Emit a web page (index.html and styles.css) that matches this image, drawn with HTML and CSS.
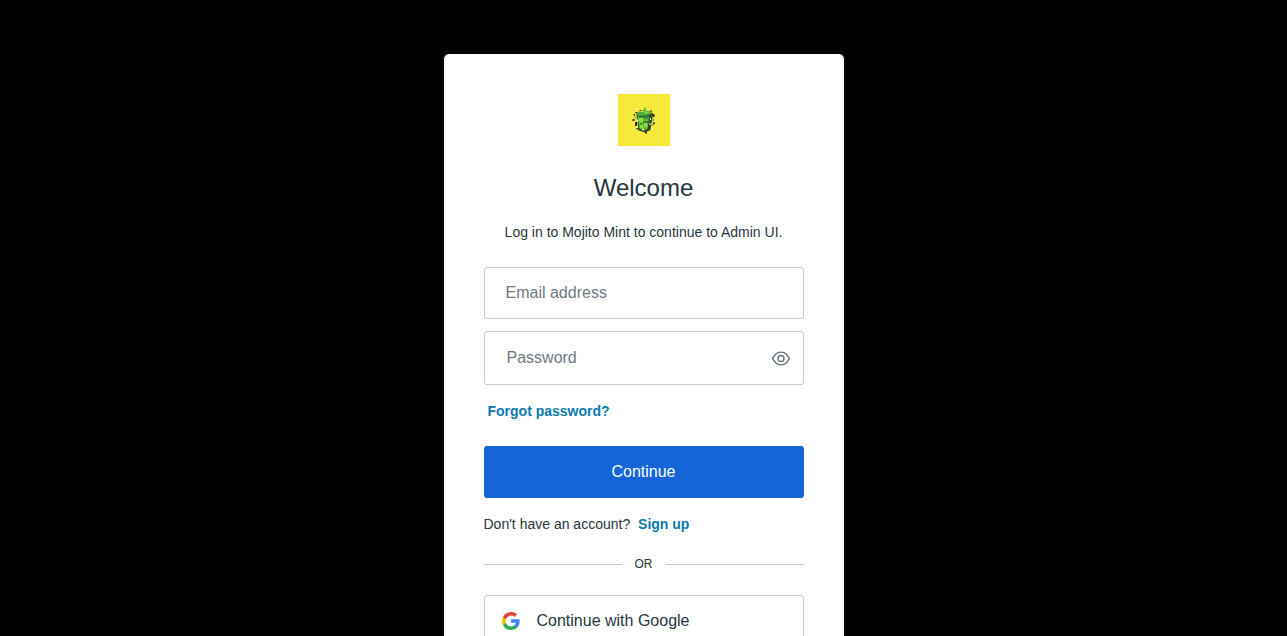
FILE: index.html
```html
<!DOCTYPE html>
<html lang="en">
<head>
    <meta charset="UTF-8">
    <meta name="viewport" content="width=device-width, initial-scale=1.0">
    <title>Log in | Admin UI</title>
    <link rel="stylesheet" href="styles.css">
</head>
<body>
    <main class="login">
        <section class="card">
            <header class="card-header">
                <svg class="logo" viewBox="0 0 52 52" role="img" aria-label="Mojito Mint">
                    <rect width="52" height="52" fill="#f7e93c"/>
                    <!-- glass -->
                    <path d="M18.5 20.5 L35 19 L32.5 36 L27 38.5 L20.5 36.5 Z" fill="#35452a"/>
                    <path d="M19.5 21.5 L31 21.5 L29.8 34.5 L26 36.5 L21.3 34.5 Z" fill="#62bf38"/>
                    <path d="M21 24 h4 v4 h-4z M26 29 h3 v4 h-3z M22 31 h3 v3 h-3z" fill="#8edb45"/>
                    <path d="M25 23 h5 v2 h-5z M22 29 h2 v2 h-2z" fill="#3a9636"/>
                    <path d="M21 22 L31 21 L31 22.5 L21 23.5 Z" fill="#2b5a2a"/>
                    <!-- mint leaves -->
                    <path d="M18 20.5 L21 17.5 L24.5 18 L27 13 L29 17 L34.5 17.5 L32 20.5 L25 22 Z" fill="#4caf35"/>
                    <path d="M26 18.5 L28 14 L28.3 18 L33 18 L28 20 Z" fill="#8bd13f"/>
                    <path d="M34.5 23 L36.5 24.5 L36 28 L34 27 Z M16 22 L18 22 L18.5 26 L17 25 Z M34 30 h2 v2 h-2z" fill="#8fc43d"/>
                    <!-- outline and speckles -->
                    <path d="M17.5 18 h2 v1.5 h-2z M14.5 25 h2 v2 h-2z M17 28 h2 v4 h-2z M34.5 20 h2 v3 h-2z M27 38 h2 v1.5 h-2z M35 28.5 h2 v1.5 h-2z M15.5 20 h1.5 v1.5 h-1.5z M21.5 16 h2 v1 h-2z M32 16.5 h2 v1 h-2z M18.5 34 h2 v1.5 h-2z M25 27.5 h5 v1 h-5z" fill="#2a301a"/>
                    <path d="M18 14.5 h2 v1.5 h-2z M19 25.5 h1.3 v2 h-1.3z M32 24 h1 v2 h-1z M31.5 29 h1 v2 h-1z M24 35 h2 v1.2 h-2z M15 28.5 h1.3 v1.3 h-1.3z M37 25.5 h1 v1.3 h-1z M18.5 32.5 h1.3 v1.3 h-1.3z M33.5 34.5 h1.3 v1.3 h-1.3z" fill="#fffbe0"/>
                </svg>
                <h1>Welcome</h1>
                <p>Log in to Mojito Mint to continue to Admin UI.</p>
            </header>

            <form class="login-form">
                <input class="field" type="email" id="email" placeholder="Email address" aria-label="Email address">
                <div class="password">
                    <input class="field" type="password" id="password" placeholder="Password" aria-label="Password">
                    <button class="toggle" type="button" aria-label="Show password">
                        <svg viewBox="0 0 20 16" width="20" height="16" fill="none" stroke="#65707b" stroke-width="1.3">
                            <path d="M1.5 8.5 L4.6 4.3 C6 2.9 7.8 2.2 10 2.2 S14 2.9 15.4 4.3 L18.5 8.5 L15.4 12.7 C14 14.1 12.2 14.8 10 14.8 S6 14.1 4.6 12.7 Z"/>
                            <circle cx="10" cy="8.5" r="3"/>
                        </svg>
                    </button>
                </div>
                <p class="forgot"><a href="#">Forgot password?</a></p>
                <button class="submit" type="submit">Continue</button>
            </form>

            <p class="signup">Don't have an account? <a href="#">Sign up</a></p>

            <div class="divider"><span>OR</span></div>

            <button class="social" type="button">
                <svg viewBox="0 0 18 18" width="18" height="18">
                    <path fill="#4285f4" d="M17.64 9.2c0-.64-.06-1.25-.16-1.84H9v3.48h4.84a4.14 4.14 0 0 1-1.8 2.72v2.26h2.92c1.7-1.57 2.68-3.88 2.68-6.62z"/>
                    <path fill="#34a853" d="M9 18c2.43 0 4.47-.8 5.96-2.18l-2.92-2.26c-.8.54-1.84.86-3.04.86-2.34 0-4.33-1.58-5.04-3.71H.96v2.33A9 9 0 0 0 9 18z"/>
                    <path fill="#fbbc05" d="M3.96 10.71A5.4 5.4 0 0 1 3.68 9c0-.6.1-1.17.28-1.71V4.96H.96A9 9 0 0 0 0 9c0 1.45.35 2.83.96 4.04l3-2.33z"/>
                    <path fill="#ea4335" d="M9 3.58c1.32 0 2.5.45 3.44 1.35l2.58-2.59A9 9 0 0 0 .96 4.96l3 2.33C4.67 5.16 6.66 3.58 9 3.58z"/>
                </svg>
                <span>Continue with Google</span>
            </button>
        </section>
    </main>
</body>
</html>
```
FILE: styles.css
```css
* {
    box-sizing: border-box;
}
body {
    margin: 0;
    background-color: #000;
    color: #273640;
    font-family: "Liberation Sans", Arial, sans-serif;
    font-size: 14px;
    line-height: 21px;
}
h1,
p {
    margin: 0;
}
a {
    color: #0a7bae;
    font-weight: bold;
    text-decoration: none;
}
a:hover {
    text-decoration: underline;
}
input,
button {
    font-family: inherit;
    font-size: 16px;
}
button {
    cursor: pointer;
}
.login {
    display: flex;
    justify-content: center;
    padding: 54px 0;
}
.card {
    width: 100%;
    max-width: 400px;
    padding: 40px;
    background: #fff;
    border-radius: 5px;
}
.card-header {
    text-align: center;
    margin-bottom: 24px;
}
.logo {
    display: block;
    width: 52px;
    height: 52px;
    margin: 0 auto 24px;
}
.card-header h1 {
    margin-bottom: 16px;
    font-size: 24px;
    font-weight: normal;
    line-height: 36px;
}
.field {
    display: block;
    width: 100%;
    height: 52px;
    padding: 0 21px;
    border: 1px solid #c2c8d0;
    border-radius: 3px;
    background: #fff;
    color: #273640;
}
.field::placeholder {
    color: #6f7a84;
    opacity: 1;
}
.password {
    display: flex;
    align-items: center;
    margin-top: 12px;
    border: 1px solid #c2c8d0;
    border-radius: 3px;
}
.password .field {
    flex: 1;
    min-width: 0;
    border-color: transparent;
}
.toggle {
    display: flex;
    padding: 12px;
    border: none;
    background: none;
}
.forgot {
    margin: 16px 0 24px;
    padding-left: 4px;
}
.submit {
    width: 100%;
    height: 52px;
    border: none;
    border-radius: 3px;
    background: #1565d8;
    color: #fff;
}
.signup {
    margin: 16px 0 20px;
}
.signup a {
    margin-left: 4px;
}
.divider {
    display: flex;
    align-items: center;
    gap: 13px;
    margin-bottom: 22px;
    font-size: 12px;
    line-height: 18px;
}
.divider::before,
.divider::after {
    content: "";
    flex: 1;
    height: 1px;
    background: #c2c8d0;
}
.social {
    display: flex;
    align-items: center;
    gap: 17px;
    width: 100%;
    height: 52px;
    padding: 0 17px;
    border: 1px solid #c2c8d0;
    border-radius: 3px;
    background: #fff;
    color: #273640;
}
```
